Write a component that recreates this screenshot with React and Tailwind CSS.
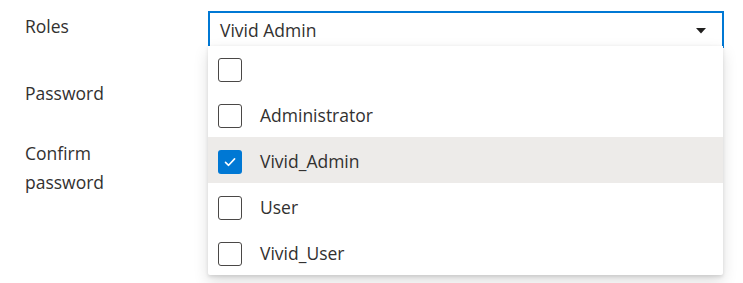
import React from "react";

const items = [
  { label: "", checked: false },
  { label: "Administrator", checked: false },
  { label: "Vivid_Admin", checked: true, hover: true },
  { label: "User", checked: false },
  { label: "Vivid_User", checked: false },
];

function Box({ checked }) {
  if (checked) {
    return (
      <div className="w-[24px] h-[24px] shrink-0 rounded-[3px] bg-[#0078d4] flex items-center justify-center">
        <svg width="14" height="14" viewBox="0 0 14 14" fill="none">
          <path d="M2.5 7.4 L5.6 10.3 L11.6 3.9" stroke="white" strokeWidth="1.6" strokeLinecap="round" strokeLinejoin="round" />
        </svg>
      </div>
    );
  }
  return <div className="w-[24px] h-[24px] shrink-0 rounded-[3px] border border-[#4a4846] bg-white" />;
}

export default function App() {
  return (
    <div
      className="relative w-[743px] h-[283px] bg-white overflow-hidden text-[#323130] text-[17.5px] leading-[29px]"
      style={{ fontFamily: '"Open Sans", "Noto Sans", sans-serif' }}
    >
      <div className="flex flex-col">
        <div className="flex mt-[11px]">
          <div className="w-[208px] pl-[25px] pt-[1px]">Roles</div>
          <div className="w-[516px] h-[37px] border-2 border-b-0 border-[#0078d4] flex items-start pl-[10px] pr-[16px]">
            <span className="flex-1 mt-[3px]">Vivid Admin</span>
            <svg width="10" height="6" viewBox="0 0 10 6" className="mt-[15px]">
              <path d="M0 0 L10 0 L5 5.5 Z" fill="#201f1e" />
            </svg>
          </div>
        </div>
        <div className="pl-[25px] mt-[31px]">Password</div>
        <div className="pl-[25px] mt-[31px] w-[140px]">Confirm password</div>
      </div>

      <div className="absolute left-[208px] top-[46px] w-[515px] pt-[0px] bg-white rounded-b-[2px] shadow-[0_6.4px_14.4px_rgba(0,0,0,0.13),0_1.2px_3.6px_rgba(0,0,0,0.11)]">
        {items.map((it, i) => (
          <div
            key={i}
            className={`flex items-center pl-[10px] gap-[18px] ${i === 0 ? "h-[45px] pt-[2px]" : "h-[46px] pt-[3px]"} ${it.hover ? "bg-[#edebe9]" : ""}`}
          >
            <Box checked={it.checked} />
            <span>{it.label}</span>
          </div>
        ))}
      </div>
    </div>
  );
}
